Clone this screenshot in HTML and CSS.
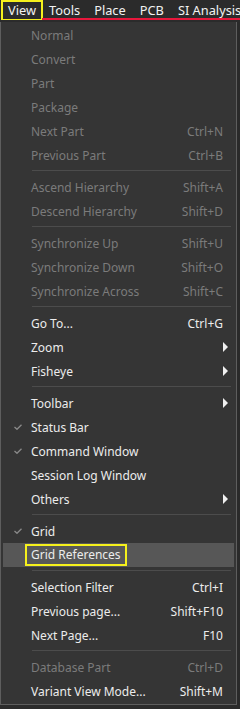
FILE: index.html
```html
<!DOCTYPE html>
<html>
<head>
<meta charset="utf-8">
<link rel="stylesheet" href="styles.css">
</head>
<body>
<div class="bar">
  <span class="top active">View</span>
  <span class="top">Tools</span>
  <span class="top">Place</span>
  <span class="top">PCB</span>
  <span class="top">SI Analysis</span>
</div>
<div class="wrap">
<div class="menu">
  <div class="item dis"><span class="chk"></span><span class="lbl">Normal</span><span class="sc"></span></div>
  <div class="item dis"><span class="chk"></span><span class="lbl">Convert</span><span class="sc"></span></div>
  <div class="item dis"><span class="chk"></span><span class="lbl">Part</span><span class="sc"></span></div>
  <div class="item dis"><span class="chk"></span><span class="lbl">Package</span><span class="sc"></span></div>
  <div class="item dis"><span class="chk"></span><span class="lbl">Next Part</span><span class="sc">Ctrl+N</span></div>
  <div class="item dis"><span class="chk"></span><span class="lbl">Previous Part</span><span class="sc">Ctrl+B</span></div>
  <div class="sep"></div>
  <div class="item dis"><span class="chk"></span><span class="lbl">Ascend Hierarchy</span><span class="sc">Shift+A</span></div>
  <div class="item dis"><span class="chk"></span><span class="lbl">Descend Hierarchy</span><span class="sc">Shift+D</span></div>
  <div class="sep"></div>
  <div class="item dis"><span class="chk"></span><span class="lbl">Synchronize Up</span><span class="sc">Shift+U</span></div>
  <div class="item dis"><span class="chk"></span><span class="lbl">Synchronize Down</span><span class="sc">Shift+O</span></div>
  <div class="item dis"><span class="chk"></span><span class="lbl">Synchronize Across</span><span class="sc">Shift+C</span></div>
  <div class="sep"></div>
  <div class="item"><span class="chk"></span><span class="lbl">Go To...</span><span class="sc">Ctrl+G</span></div>
  <div class="item"><span class="chk"></span><span class="lbl">Zoom</span><span class="arrow"></span></div>
  <div class="item"><span class="chk"></span><span class="lbl">Fisheye</span><span class="arrow"></span></div>
  <div class="sep"></div>
  <div class="item"><span class="chk"></span><span class="lbl">Toolbar</span><span class="arrow"></span></div>
  <div class="item"><span class="chk"><svg width="8" height="6" viewBox="0 0 8 6"><path d="M0.5 3 L3 5.3 L7.5 0.7" fill="none" stroke="#8a8a8a" stroke-width="1.3"/></svg></span><span class="lbl">Status Bar</span><span class="sc"></span></div>
  <div class="item"><span class="chk"><svg width="8" height="6" viewBox="0 0 8 6"><path d="M0.5 3 L3 5.3 L7.5 0.7" fill="none" stroke="#8a8a8a" stroke-width="1.3"/></svg></span><span class="lbl">Command Window</span><span class="sc"></span></div>
  <div class="item"><span class="chk"></span><span class="lbl">Session Log Window</span><span class="sc"></span></div>
  <div class="item"><span class="chk"></span><span class="lbl">Others</span><span class="arrow"></span></div>
  <div class="sep"></div>
  <div class="item"><span class="chk"><svg width="8" height="6" viewBox="0 0 8 6"><path d="M0.5 3 L3 5.3 L7.5 0.7" fill="none" stroke="#8a8a8a" stroke-width="1.3"/></svg></span><span class="lbl">Grid</span><span class="sc"></span></div>
  <div class="item hl"><span class="chk"></span><span class="lbl boxed">Grid References</span><span class="sc"></span></div>
  <div class="sep"></div>
  <div class="item"><span class="chk"></span><span class="lbl">Selection Filter</span><span class="sc">Ctrl+I</span></div>
  <div class="item"><span class="chk"></span><span class="lbl">Previous page...</span><span class="sc">Shift+F10</span></div>
  <div class="item"><span class="chk"></span><span class="lbl">Next Page...</span><span class="sc">F10</span></div>
  <div class="sep"></div>
  <div class="item dis"><span class="chk"></span><span class="lbl">Database Part</span><span class="sc">Ctrl+D</span></div>
  <div class="item"><span class="chk"></span><span class="lbl">Variant View Mode...</span><span class="sc">Shift+M</span></div>
</div>
<div class="side"></div>
</div>
</body>
</html>
```
FILE: styles.css
```css
html, body {
  margin: 0;
  padding: 0;
  background: #2b2b2b;
  width: 240px;
  height: 709px;
  overflow: hidden;
  font-family: "Noto Sans", "Open Sans", sans-serif;
}
.bar {
  height: 20px;
  display: flex;
  align-items: center;
  gap: 14px;
  background: #2b2b2b;
  border-bottom: 2px solid #2b2b2b;
  position: relative;
  white-space: nowrap;
  overflow: hidden;
}
.bar::after {
  content: "";
  position: absolute;
  left: 42px;
  right: 0;
  bottom: 0;
  height: 2px;
  background: #e8173c;
}
.top {
  color: #f2f2f2;
  font-size: 12.8px;
  line-height: 18px;
  flex: none;
}
.top.active {
  margin-left: 1px;
  border: 2px solid #f5f01c;
  padding: 0 5px 0 5px;
  height: 17px;
  line-height: 17px;
  margin-right: -8px;
}
.wrap {
  display: flex;
}
.menu {
  width: 237px;
  background: #353535;
  border: 1px solid #5e5e5e;
  border-top: none;
  padding: 1px 0 1px 0;
  box-sizing: border-box;
  height: 683px;
}
.side {
  flex: 1;
  background: #2a2a2a;
}
.item {
  height: 24px;
  display: flex;
  align-items: center;
  color: #ececec;
  font-size: 12px;
  margin: 0 2px;
}
.item.dis { color: #7b7b7b; }
.item.hl { background: #575757; }
.chk {
  width: 28px;
  flex: none;
  display: flex;
  justify-content: center;
  padding-left: 2px;
  box-sizing: border-box;
}
.lbl { flex: 1; white-space: nowrap; }
.sc {
  padding-right: 11px;
  white-space: nowrap;
}
.arrow {
  width: 0;
  height: 0;
  border-top: 5px solid transparent;
  border-bottom: 5px solid transparent;
  border-left: 5px solid #f0f0f0;
  margin-right: 6px;
}
.sep {
  height: 1px;
  margin: 3px 5px 4px 31px;
  background: #4c4c4c;
}
.boxed {
  flex: none;
  border: 2px solid #f5f01c;
  margin-left: -6px;
  padding: 0 4px;
  height: 18px;
  line-height: 18px;
}
```
